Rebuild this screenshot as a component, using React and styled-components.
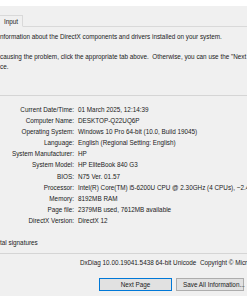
import React from "react";
import styled, { createGlobalStyle } from "styled-components";

const Global = createGlobalStyle`
  html, body { margin: 0; padding: 0; background: #f0f0f0; }
  body { font-family: "Liberation Sans", Arial, sans-serif; }
`;

const Window = styled.div`
  width: 247px;
  height: 296px;
  overflow: hidden;
  background: #f0f0f0;
  display: flex;
  flex-direction: column;
  font-family: "Liberation Sans", Arial, sans-serif;
  font-size: 6.35px;
  color: #1b1b1b;
  white-space: nowrap;
`;

const TopBand = styled.div`
  height: 6px;
  background: #ffffff;
  flex: none;
`;

const TabStrip = styled.div`
  height: 20px;
  flex: none;
  display: flex;
  align-items: flex-end;
  border-bottom: 1px solid #d9d9d9;
`;

const Tab = styled.div`
  width: 18px;
  height: 10px;
  margin-left: -1px;
  margin-bottom: -1px;
  border: 1px solid #d9d9d9;
  border-bottom: 1px solid #f0f0f0;
  background: #f0f0f0;
  display: flex;
  align-items: center;
  padding-left: 4px;
  box-sizing: content-box;
`;

const Panel = styled.div`
  flex: 1;
  display: flex;
  flex-direction: column;
  padding-top: 5px;
`;

const Para = styled.div`
  line-height: 10px;
  margin-bottom: ${(p) => p.$gap || 0}px;
`;

const Separator = styled.div`
  height: 1px;
  background: #d5d5d5;
  margin: ${(p) => p.$top || 0}px 0 ${(p) => p.$bottom || 0}px;
  flex: none;
`;

const InfoGrid = styled.div`
  display: grid;
  grid-template-columns: 74px 1fr;
  column-gap: 4px;
  line-height: 11.1px;
`;

const Label = styled.div`
  text-align: right;
`;

const Value = styled.div`
  overflow: visible;
`;

const Footer = styled.div`
  line-height: 10px;
  padding-left: ${(p) => p.$indent || 0}px;
  margin-top: ${(p) => p.$top || 0}px;
`;

const ButtonRow = styled.div`
  display: flex;
  gap: 4px;
  padding-left: 99px;
  margin-top: 10px;
`;

const Button = styled.div`
  height: 11px;
  width: ${(p) => p.$w}px;
  border: 1px solid ${(p) => (p.$focused ? "#0078d7" : "#adadad")};
  background: #e1e1e1;
  display: flex;
  align-items: center;
  justify-content: ${(p) => (p.$left ? "flex-start" : "center")};
  padding-left: ${(p) => (p.$left ? 6 : 0)}px;
  box-sizing: content-box;
`;

const rows = [
  ["Current Date/Time:", "01 March 2025, 12:14:39"],
  ["Computer Name:", "DESKTOP-Q22UQ6P"],
  ["Operating System:", "Windows 10 Pro 64-bit (10.0, Build 19045)"],
  ["Language:", "English (Regional Setting: English)"],
  ["System Manufacturer:", "HP"],
  ["System Model:", "HP EliteBook 840 G3"],
  ["BIOS:", "N75 Ver. 01.57"],
  ["Processor:", "Intel(R) Core(TM) i5-6200U CPU @ 2.30GHz (4 CPUs), ~2.4GHz"],
  ["Memory:", "8192MB RAM"],
  ["Page file:", "2379MB used, 7612MB available"],
  ["DirectX Version:", "DirectX 12"],
];

export default function App() {
  return (
    <>
      <Global />
      <Window>
        <TopBand />
        <TabStrip>
          <Tab>Input</Tab>
        </TabStrip>
        <Panel>
          <Para $gap={10}>
            nformation about the DirectX components and drivers installed on your system.
          </Para>
          <Para>
            causing the problem, click the appropriate tab above.&nbsp; Otherwise, you can use the "Next Page" button
            <br />
            ce.
          </Para>
          <Separator $top={23} $bottom={8} />
          <InfoGrid>
            {rows.map(([l, v]) => (
              <React.Fragment key={l}>
                <Label>{l}</Label>
                <Value>{v}</Value>
              </React.Fragment>
            ))}
          </InfoGrid>
          <Footer $top={12}>tal signatures</Footer>
          <Separator $top={5} $bottom={4} />
          <Footer $indent={80}>
            DxDiag 10.00.19041.5438 64-bit Unicode&nbsp; Copyright © Microsoft. All rights reserved.
          </Footer>
          <ButtonRow>
            <Button $w={71} $focused>Next Page</Button>
            <Button $w={60} $left>Save All Information...</Button>
          </ButtonRow>
        </Panel>
      </Window>
    </>
  );
}
